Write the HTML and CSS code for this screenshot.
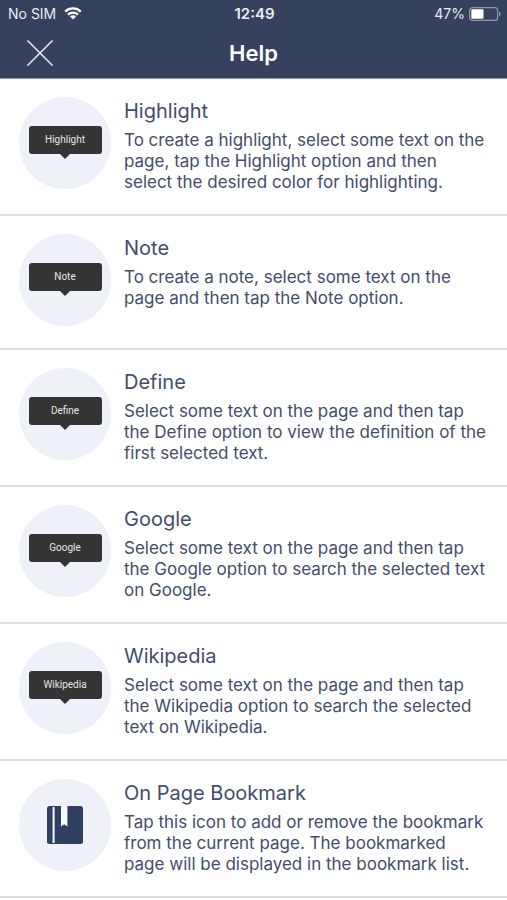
FILE: index.html
```html
<!DOCTYPE html>
<html lang="en">
<head>
<meta charset="utf-8">
<meta name="viewport" content="width=device-width, initial-scale=1">
<title>Help</title>
<link rel="stylesheet" href="styles.css">
</head>
<body>
<header class="top">
  <div class="status">
    <div class="carrier">
      <span>No SIM</span>
      <svg class="wifi" viewBox="0 0 18 13" aria-hidden="true">
        <path d="M1.2 4.6a11.2 11.2 0 0 1 15.6 0M4 7.6a7.2 7.2 0 0 1 10 0" fill="none" stroke="currentColor" stroke-width="2.2"/>
        <path d="M9 12.6L5.9 9.5a4.4 4.4 0 0 1 6.2 0z" fill="currentColor"/>
      </svg>
    </div>
    <span class="clock">12:49</span>
    <div class="power">
      <span>47%</span>
      <svg class="battery" viewBox="0 0 32 14" aria-hidden="true">
        <rect x=".6" y=".6" width="28" height="12.8" rx="3" fill="none" stroke="#8e98ab" stroke-width="1.2"/>
        <rect x="2.3" y="2.3" width="12.2" height="9.4" rx="1" fill="#fff"/>
        <path d="M30 4.5a2.7 2.7 0 0 1 0 5z" fill="#8e98ab"/>
      </svg>
    </div>
  </div>
  <div class="bar">
    <button class="close" type="button" aria-label="Close">
      <svg viewBox="0 0 26 26" aria-hidden="true"><path d="M.5.5l25 25M25.5.5l-25 25" stroke="currentColor" stroke-width="1.5"/></svg>
    </button>
    <h1>Help</h1>
  </div>
</header>
<main>
  <ul class="list">
    <li class="row">
      <div class="disc"><span class="tip">Highlight</span></div>
      <div class="text"><h2>Highlight</h2><p>To create a highlight, select some text on the page, tap the Highlight option and then select the desired color for highlighting.</p></div>
    </li>
    <li class="row">
      <div class="disc"><span class="tip">Note</span></div>
      <div class="text"><h2>Note</h2><p>To create a note, select some text on the page and then tap the Note option.</p></div>
    </li>
    <li class="row">
      <div class="disc"><span class="tip">Define</span></div>
      <div class="text"><h2>Define</h2><p>Select some text on the page and then tap the Define option to view the definition of the first selected text.</p></div>
    </li>
    <li class="row">
      <div class="disc"><span class="tip">Google</span></div>
      <div class="text"><h2>Google</h2><p>Select some text on the page and then tap the Google option to search the selected text on Google.</p></div>
    </li>
    <li class="row">
      <div class="disc"><span class="tip">Wikipedia</span></div>
      <div class="text"><h2>Wikipedia</h2><p>Select some text on the page and then tap the Wikipedia option to search the selected text on Wikipedia.</p></div>
    </li>
    <li class="row">
      <div class="disc">
        <svg class="book" viewBox="0 0 36 38" aria-hidden="true">
          <path d="M2.5 0h31a2.5 2.5 0 0 1 2.5 2.5v33a2.5 2.5 0 0 1-2.5 2.5h-31a2.5 2.5 0 0 1-2.5-2.5v-33a2.5 2.5 0 0 1 2.5-2.5z" fill="#2f3f5f"/>
          <path d="M5.6 1h2v36h-2zM14 0h6.4v20.5l-3.2-2.3-3.2 2.3z" fill="#f8fafd"/>
        </svg>
      </div>
      <div class="text"><h2>On Page Bookmark</h2><p>Tap this icon to add or remove the bookmark from the current page. The bookmarked page will be displayed in the bookmark list.</p></div>
    </li>
  </ul>
</main>
</body>
</html>
```
FILE: styles.css
```css
* {
  box-sizing: border-box;
}

body {
  margin: 0;
  background: #fff;
  color: #434d69;
  font-family: Inter, "Liberation Sans", sans-serif;
}

h1, h2, p, ul {
  margin: 0;
  padding: 0;
}

.top {
  background: #36425d;
  color: #fff;
  border-bottom: 1px solid #8996ad;
}

.status {
  display: grid;
  grid-template-columns: 1fr auto 1fr;
  align-items: center;
  height: 27px;
  padding: 0 6px 0 8px;
  font-size: 14px;
  color: #e8ecf3;
}

.carrier, .power {
  display: flex;
  align-items: center;
  gap: 8px;
}

.power {
  justify-content: flex-end;
  gap: 4px;
}

.clock {
  font-size: 15px;
  font-weight: 600;
}

.wifi {
  width: 18px;
  height: 13px;
  color: #fff;
}

.battery {
  width: 32px;
  height: 14px;
}

.bar {
  display: grid;
  grid-template-columns: 80px 1fr 80px;
  align-items: center;
  height: 51px;
}

.close {
  display: flex;
  align-items: center;
  justify-content: center;
  height: 51px;
  padding: 0;
  border: 0;
  background: none;
  color: #e8ecf3;
}

.close svg {
  width: 26px;
  height: 26px;
}

h1 {
  font-size: 22px;
  line-height: 28px;
  font-weight: 600;
  text-align: center;
}

.list {
  list-style: none;
}

.row {
  display: flex;
  gap: 13px;
  min-height: 134px;
  padding: 18px 19px 21px 19px;
  border-bottom: 2px solid #dcdcde;
}

.disc {
  flex: none;
  display: flex;
  align-items: center;
  justify-content: center;
  width: 92px;
  height: 92px;
  border-radius: 50%;
  background: #eef1f8;
}

.tip {
  position: relative;
  width: 73px;
  margin-bottom: 6px;
  border-radius: 3px;
  background: #343434;
  color: #e6e6e6;
  font-family: Roboto, sans-serif;
  font-size: 10px;
  line-height: 28px;
  text-align: center;
}

.tip::after {
  content: "";
  position: absolute;
  top: 100%;
  left: 50%;
  margin-left: -5px;
  border: 5px solid transparent;
  border-top-color: #343434;
  border-bottom: 0;
}

.book {
  width: 36px;
  height: 38px;
}

h2 {
  margin-bottom: 5px;
  font-size: 20px;
  line-height: 28px;
  font-weight: 400;
}

p {
  font-size: 17px;
  line-height: 21px;
}
```
